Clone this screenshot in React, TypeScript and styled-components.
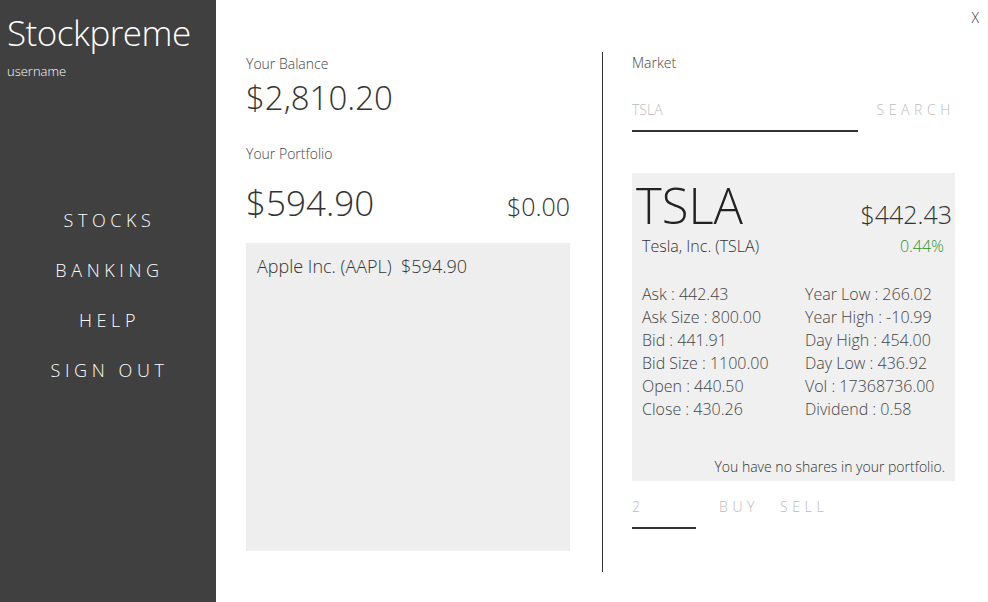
import React from "react";
import styled, { createGlobalStyle } from "styled-components";

const Global = createGlobalStyle`
  html, body { margin: 0; padding: 0; background: #fff; }
  body { font-family: "Open Sans", "Noto Sans", sans-serif; font-weight: 300; color: #333; }
  * { box-sizing: border-box; }
`;

const Page = styled.div`
  display: flex;
  width: 988px;
  height: 602px;
  position: relative;
  overflow: hidden;
`;

const Sidebar = styled.aside`
  width: 216px;
  background: #404040;
  color: #fff;
  display: flex;
  flex-direction: column;
  padding: 10px 0 0 7px;
`;

const Brand = styled.div`
  font-size: 35px;
  line-height: 46px;
  font-weight: 300;
  letter-spacing: -0.5px;
`;

const User = styled.div`
  font-size: 13px;
  line-height: 18px;
  margin-top: 6px;
`;

const Nav = styled.nav`
  display: flex;
  flex-direction: column;
  align-items: center;
  margin-top: 127px;
  margin-left: -9px;
  gap: 24px;
`;

const NavItem = styled.a`
  font-size: 18px;
  line-height: 26px;
  letter-spacing: 4.6px;
  color: #fff;
  padding-left: 5px;
`;

const Main = styled.main`
  flex: 1;
  display: flex;
  padding: 52px 0 30px 30px;
`;

const Left = styled.section`
  width: 324px;
  display: flex;
  flex-direction: column;
`;

const Label = styled.div<{ $mt?: number }>`
  font-size: 14px;
  line-height: 20px;
  color: #444;
  margin-top: ${(p) => p.$mt ?? 0}px;
`;

const Big = styled.div<{ $size?: number }>`
  font-size: ${(p) => p.$size ?? 35}px;
  line-height: 48px;
  color: #333;
`;

const PortfolioRow = styled.div`
  display: flex;
  justify-content: space-between;
  align-items: baseline;
  margin-top: 15px;
`;

const PortfolioBox = styled.div`
  margin-top: 13px;
  height: 308px;
  background: #eeeeee;
  padding: 10px 11px;
  font-size: 18px;
  line-height: 26px;
  color: #333;
`;

const Divider = styled.div`
  width: 1px;
  background: #333;
  margin: 0 29px 0 32px;
  height: 520px;
`;

const Right = styled.section`
  width: 323px;
  display: flex;
  flex-direction: column;
`;

const SearchRow = styled.div`
  display: flex;
  align-items: flex-end;
  margin-top: 27px;
`;

const UnderInput = styled.div<{ $w: number }>`
  width: ${(p) => p.$w}px;
  border-bottom: 2px solid #333;
  font-size: 14px;
  line-height: 20px;
  padding-bottom: 10px;
  color: #bbb;
`;

const TextButton = styled.span<{ $ml: number }>`
  margin-left: ${(p) => p.$ml}px;
  font-size: 14px;
  line-height: 20px;
  letter-spacing: 4.6px;
  color: #bbb;
  padding-bottom: 12px;
`;

const Card = styled.div`
  margin-top: 41px;
  height: 308px;
  background: #f0f0f0;
  display: flex;
  flex-direction: column;
  padding: 5px 3px 4px 4px;
`;

const CardHead = styled.div`
  display: flex;
  justify-content: space-between;
  align-items: baseline;
`;

const Ticker = styled.div`
  font-size: 49px;
  line-height: 54px;
  color: #222;
`;

const Price = styled.div`
  font-size: 25px;
  line-height: 34px;
  color: #333;
`;

const SubHead = styled.div`
  display: flex;
  justify-content: space-between;
  padding: 0 8px 0 6px;
  font-size: 16px;
  line-height: 22px;
  margin-top: 3px;
`;

const Change = styled.span`
  color: #2f952f;
`;

const Stats = styled.div`
  display: grid;
  grid-template-columns: 163px 1fr;
  padding-left: 6px;
  margin-top: 26px;
  font-size: 16px;
  line-height: 23px;
  color: #444;
`;

const Note = styled.div`
  margin-top: auto;
  text-align: right;
  font-size: 14px;
  line-height: 20px;
  padding-right: 7px;
  color: #333;
`;

const TradeRow = styled.div`
  display: flex;
  align-items: flex-end;
  margin-top: 16px;
`;

const Close = styled.div`
  position: absolute;
  top: 8px;
  right: 9px;
  font-size: 14px;
  color: #333;
`;

const stats: [string, string][] = [
  ["Ask : 442.43", "Year Low : 266.02"],
  ["Ask Size : 800.00", "Year High : -10.99"],
  ["Bid : 441.91", "Day High : 454.00"],
  ["Bid Size : 1100.00", "Day Low : 436.92"],
  ["Open : 440.50", "Vol : 17368736.00"],
  ["Close : 430.26", "Dividend : 0.58"],
];

export default function App() {
  return (
    <Page>
      <Global />
      <Sidebar>
        <Brand>Stockpreme</Brand>
        <User>username</User>
        <Nav>
          <NavItem>STOCKS</NavItem>
          <NavItem>BANKING</NavItem>
          <NavItem>HELP</NavItem>
          <NavItem>SIGN OUT</NavItem>
        </Nav>
      </Sidebar>
      <Main>
        <Left>
          <Label $mt={2}>Your Balance</Label>
          <Big $size={33}>$2,810.20</Big>
          <Label $mt={22}>Your Portfolio</Label>
          <PortfolioRow>
            <Big>$594.90</Big>
            <Big $size={25}>$0.00</Big>
          </PortfolioRow>
          <PortfolioBox>Apple Inc. (AAPL)&nbsp;&nbsp;$594.90</PortfolioBox>
        </Left>
        <Divider />
        <Right>
          <Label $mt={1}>Market</Label>
          <SearchRow>
            <UnderInput $w={230}>TSLA</UnderInput>
            <TextButton $ml={19}>SEARCH</TextButton>
          </SearchRow>
          <Card>
            <CardHead>
              <Ticker>TSLA</Ticker>
              <Price>$442.43</Price>
            </CardHead>
            <SubHead>
              <span>Tesla, Inc. (TSLA)</span>
              <Change>0.44%</Change>
            </SubHead>
            <Stats>
              {stats.map(([a, b]) => (
                <React.Fragment key={a}>
                  <div>{a}</div>
                  <div>{b}</div>
                </React.Fragment>
              ))}
            </Stats>
            <Note>You have no shares in your portfolio.</Note>
          </Card>
          <TradeRow>
            <UnderInput $w={64}>2</UnderInput>
            <TextButton $ml={23}>BUY</TextButton>
            <TextButton $ml={21}>SELL</TextButton>
          </TradeRow>
        </Right>
      </Main>
      <Close>X</Close>
    </Page>
  );
}
